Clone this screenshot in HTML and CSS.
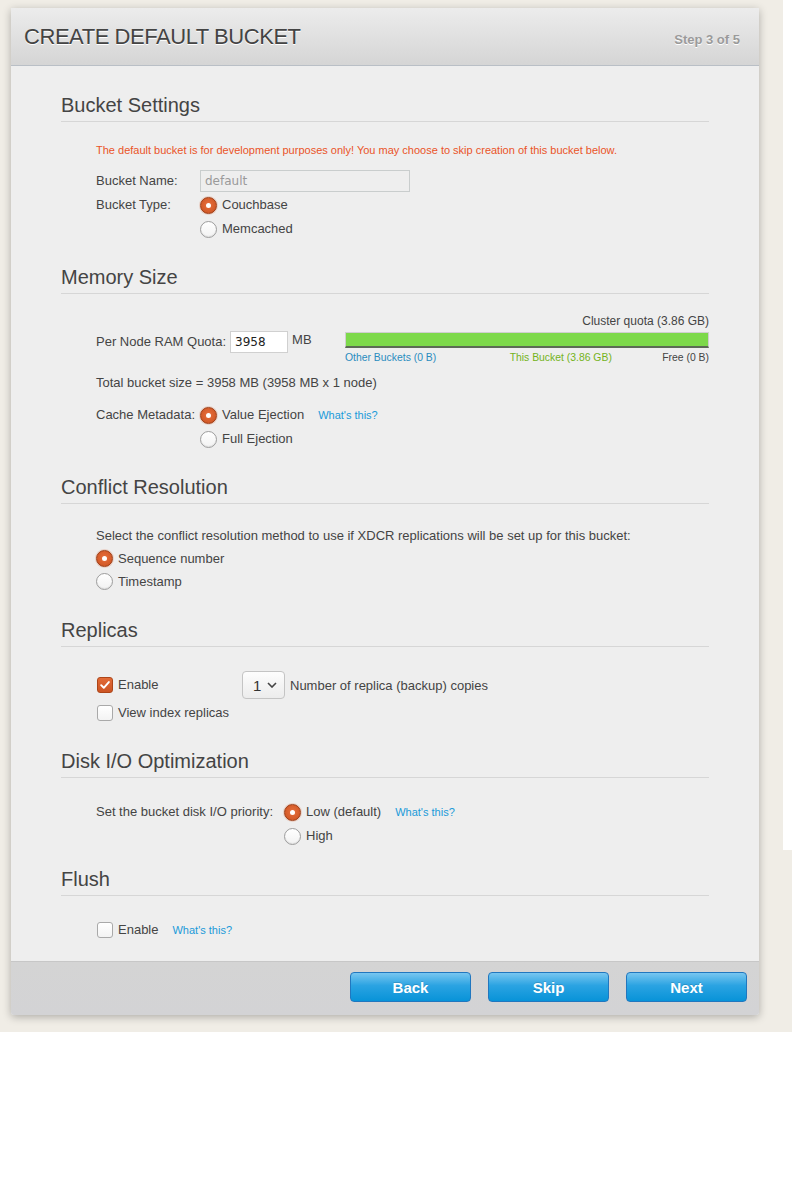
FILE: index.html
```html
<!DOCTYPE html>
<html>
<head>
<meta charset="utf-8">
<link rel="stylesheet" href="styles.css">
</head>
<body>
<div class="page">
  <div class="dialog">
    <div class="dlg-head">
      <h1 class="dlg-title">CREATE DEFAULT BUCKET</h1>
      <span class="dlg-step">Step 3 of 5</span>
    </div>
    <div class="dlg-body">
      <section class="sec sec-settings">
        <h2 class="sec-title">Bucket Settings</h2>
        <div class="sec-content">
          <p class="warning">The default bucket is for development purposes only! You may choose to skip creation of this bucket below.</p>
          <div class="row">
            <span class="lbl lbl-fixed">Bucket Name:</span>
            <input class="txt txt-name" type="text" value="default" disabled>
          </div>
          <div class="row row-top">
            <span class="lbl lbl-fixed">Bucket Type:</span>
            <div class="opts">
              <label class="opt"><span class="radio on"></span>Couchbase</label>
              <label class="opt"><span class="radio"></span>Memcached</label>
            </div>
          </div>
        </div>
      </section>

      <section class="sec sec-memory">
        <h2 class="sec-title">Memory Size</h2>
        <div class="sec-content">
          <div class="quota-row">
            <div class="quota-left">
              <span class="lbl">Per Node RAM Quota:</span>
              <input class="txt txt-ram" type="text" value="3958">
              <span class="mb">MB</span>
            </div>
            <div class="quota-right">
              <div class="cluster">Cluster quota (3.86 GB)</div>
              <div class="bar"><div class="bar-fill" style="width:100%"></div></div>
              <div class="legend">
                <span class="lg-other">Other Buckets (0 B)</span>
                <span class="lg-this">This Bucket (3.86 GB)</span>
                <span class="lg-free">Free (0 B)</span>
              </div>
            </div>
          </div>
          <div class="row total">Total bucket size = 3958 MB (3958 MB x 1 node)</div>
          <div class="row row-top cache">
            <span class="lbl">Cache Metadata:</span>
            <div class="opts">
              <label class="opt"><span class="radio on"></span>Value Ejection<a class="help">What's this?</a></label>
              <label class="opt"><span class="radio"></span>Full Ejection</label>
            </div>
          </div>
        </div>
      </section>

      <section class="sec sec-conflict">
        <h2 class="sec-title">Conflict Resolution</h2>
        <div class="sec-content">
          <div class="row">Select the conflict resolution method to use if XDCR replications will be set up for this bucket:</div>
          <label class="opt"><span class="radio on"></span>Sequence number</label>
          <label class="opt"><span class="radio"></span>Timestamp</label>
        </div>
      </section>

      <section class="sec sec-replicas">
        <h2 class="sec-title">Replicas</h2>
        <div class="sec-content">
          <div class="rep-row">
            <label class="opt opt-enable"><span class="check on"><svg viewBox="0 0 16 16" width="16" height="16"><path d="M3.6 8.2 L6.6 11.2 L12.4 4.6" fill="none" stroke="#fff" stroke-width="2.2" stroke-linecap="round" stroke-linejoin="round"/></svg></span>Enable</label>
            <span class="sel">1<svg viewBox="0 0 10 6" width="10" height="6"><path d="M1 1 L5 5 L9 1" fill="none" stroke="#444" stroke-width="1.6"/></svg></span>
            <span class="rep-text">Number of replica (backup) copies</span>
          </div>
          <label class="opt"><span class="check"></span>View index replicas</label>
        </div>
      </section>

      <section class="sec sec-disk">
        <h2 class="sec-title">Disk I/O Optimization</h2>
        <div class="sec-content">
          <div class="row row-top">
            <span class="lbl lbl-disk">Set the bucket disk I/O priority:</span>
            <div class="opts">
              <label class="opt"><span class="radio on"></span>Low (default)<a class="help">What's this?</a></label>
              <label class="opt"><span class="radio"></span>High</label>
            </div>
          </div>
        </div>
      </section>

      <section class="sec sec-flush">
        <h2 class="sec-title">Flush</h2>
        <div class="sec-content">
          <label class="opt"><span class="check"></span>Enable<a class="help">What's this?</a></label>
        </div>
      </section>
    </div>
    <div class="dlg-foot">
      <button class="btn">Back</button>
      <button class="btn">Skip</button>
      <button class="btn">Next</button>
    </div>
  </div>
</div>
</body>
</html>
```

FILE: styles.css
```css
html, body {
  margin: 0;
  padding: 0;
  background: #fff;
}
body {
  font-family: "Liberation Sans", Arial, sans-serif;
  font-size: 13px;
  color: #444;
}
.page {
  position: relative;
  width: 792px;
  height: 1032px;
  background: #f0ede6;
  padding-top: 8px;
  box-sizing: border-box;
}
.page::after {
  content: "";
  position: absolute;
  right: 0;
  top: 0;
  width: 9px;
  height: 850px;
  background: #fff;
}
.dialog {
  margin-left: 11px;
  width: 748px;
  background: #eeeeee;
  box-shadow: 0 2px 9px rgba(0, 0, 0, 0.28);
  border-radius: 0 0 3px 3px;
  position: relative;
  z-index: 1;
}
.dlg-head {
  height: 57px;
  display: flex;
  align-items: center;
  justify-content: space-between;
  padding: 0 19px 0 13px;
  background: linear-gradient(#ececec, #d5d5d5);
  border-bottom: 1px solid #b9bfc6;
}
.dlg-title {
  margin: 0;
  font-size: 22px;
  font-weight: normal;
  color: #444;
  text-shadow: 0 1px 0 #fff;
  letter-spacing: -0.45px;
  padding-top: 1px;
}
.dlg-step {
  font-size: 13px;
  font-weight: bold;
  color: #9a9a9a;
  text-shadow: 0 1px 0 #fff;
  padding-top: 5px;
}
.dlg-body {
  padding: 27px 50px 19px;
}
.sec-title {
  margin: 0;
  font-size: 20px;
  font-weight: normal;
  line-height: 24px;
  color: #444;
  padding-bottom: 4px;
  border-bottom: 1px solid #d6d6d6;
}
.sec-content {
  padding: 20px 0 0 35px;
}
.sec-memory { margin-top: 24px; }
.sec-conflict { margin-top: 24px; }
.sec-replicas { margin-top: 25px; }
.sec-disk { margin-top: 24px; }
.sec-flush { margin-top: 19px; }

.warning {
  margin: 0 0 11px;
  font-size: 11px;
  line-height: 16px;
  color: #ea5428;
}
.row {
  display: flex;
  align-items: center;
  min-height: 24px;
  line-height: 24px;
}
.row-top { align-items: flex-start; }
.lbl { white-space: nowrap; margin-right: 5px; }
.lbl-fixed { width: 104px; margin-right: 0; flex: none; }
.lbl-disk { margin-right: 11px; }
.opts { display: flex; flex-direction: column; }
.opt {
  display: flex;
  align-items: center;
  height: 24px;
  line-height: 24px;
  white-space: nowrap;
}
.radio {
  flex: none;
  box-sizing: border-box;
  width: 17px;
  height: 17px;
  border-radius: 50%;
  margin: 0 5px 0 0;
  background: linear-gradient(#ffffff, #f2f2f2);
  border: 1px solid #9d9d9d;
  box-shadow: inset 0 -1px 1px rgba(0,0,0,0.08);
  position: relative;
}
.radio.on {
  background: radial-gradient(circle at 50% 45%, #e8703d, #c9501f);
  border: 1px solid #9e3d15;
  box-shadow: 0 0 0 1px rgba(220,120,80,0.25);
}
.radio.on::after {
  content: "";
  position: absolute;
  left: 50%;
  top: 50%;
  width: 5px;
  height: 5px;
  margin: -2.5px 0 0 -2.5px;
  border-radius: 50%;
  background: #fff;
}
.check {
  flex: none;
  box-sizing: border-box;
  width: 16px;
  height: 16px;
  border-radius: 3px;
  margin: 0 5px 0 1px;
  background: linear-gradient(#ffffff, #f3f3f3);
  border: 1px solid #a9a9a9;
  display: flex;
  align-items: center;
  justify-content: center;
}
.check.on {
  background: linear-gradient(#e26a36, #cc5423);
  border-color: #ad4518;
}
.check svg { display: block; }
.help {
  font-size: 11px;
  color: #1a9ad9;
  margin-left: 14px;
  text-decoration: none;
}
.txt {
  box-sizing: border-box;
  height: 22px;
  border: 1px solid #c8cccc;
  font-family: "DejaVu Sans", sans-serif;
  font-size: 12px;
  padding: 0 4px;
  margin: 0;
}
.txt-name {
  width: 210px;
  background: #eeeeee;
  color: #9a9a9a;
  border-color: #c9cdcd;
}
.txt-ram {
  width: 58px;
  background: #fff;
  color: #222;
  border-color: #d0d0d0;
}

.sec-memory .sec-content { padding-top: 19px; }
.quota-row {
  display: flex;
  justify-content: space-between;
  align-items: flex-start;
}
.quota-left {
  display: flex;
  align-items: flex-start;
  margin-top: 18px;
  line-height: 20px;
}
.quota-left .lbl { line-height: 22px; margin-right: 4px; }
.mb { margin-left: 4px; line-height: 18px; }
.quota-right {
  width: 364px;
}
.cluster {
  text-align: right;
  line-height: 16px;
  font-size: 12px;
}
.bar {
  margin-top: 3px;
  height: 16px;
  box-sizing: border-box;
  border: 1px solid #cfcfcf;
  border-bottom: 2px solid #5c6a55;
  background: #e4e4e4;
}
.bar-fill {
  height: 100%;
  background: #7dd94a;
}
.legend {
  display: flex;
  justify-content: space-between;
  font-size: 10.4px;
  line-height: 14px;
  margin-top: 3px;
}
.lg-other { color: #2a8cbf; }
.lg-this { color: #74b31b; padding-left: 23px; }
.lg-free { color: #444; }
.total { margin-top: 6px; }
.cache { margin-top: 8px; }

.sec-conflict .sec-content { padding-top: 20px; }
.sec-conflict .row { min-height: 23px; line-height: 23px; }
.sec-conflict .opt { height: 23px; line-height: 23px; }

.sec-replicas .sec-content { padding-top: 21px; }
.rep-row {
  display: flex;
  align-items: center;
  margin-top: 3px;
  height: 28px;
}
.opt-enable { width: 146px; }
.sel {
  box-sizing: border-box;
  width: 43px;
  height: 28px;
  border: 1px solid #c4c4c4;
  border-radius: 4px;
  background: linear-gradient(#fdfdfd, #ececec);
  display: flex;
  align-items: center;
  justify-content: space-between;
  padding: 0 7px 0 10px;
  font-size: 15px;
  color: #333;
  margin-right: 5px;
}
.sec-replicas .sec-content > .opt { margin-top: 2px; }
.sec-disk .sec-content { padding-top: 22px; }
.sec-flush .sec-content { padding-top: 22px; }

.dlg-foot {
  height: 54px;
  box-sizing: border-box;
  border-top: 1px solid #c7c7c7;
  background: linear-gradient(#d4d4d4, #d3d3d5);
  display: flex;
  justify-content: flex-end;
  align-items: flex-start;
  gap: 17px;
  padding: 10px 12px 0 0;
  border-radius: 0 0 3px 3px;
}
.btn {
  width: 121px;
  height: 30px;
  box-sizing: border-box;
  border: 1px solid #2177bf;
  border-radius: 4px;
  background: linear-gradient(#78c6f0 0%, #2aa3e2 45%, #0893d8 100%);
  color: #fff;
  font-family: "Liberation Sans", Arial, sans-serif;
  font-size: 15px;
  font-weight: bold;
  text-shadow: 0 -1px 0 rgba(0,0,0,0.15);
  padding: 0;
  cursor: pointer;
}
```
